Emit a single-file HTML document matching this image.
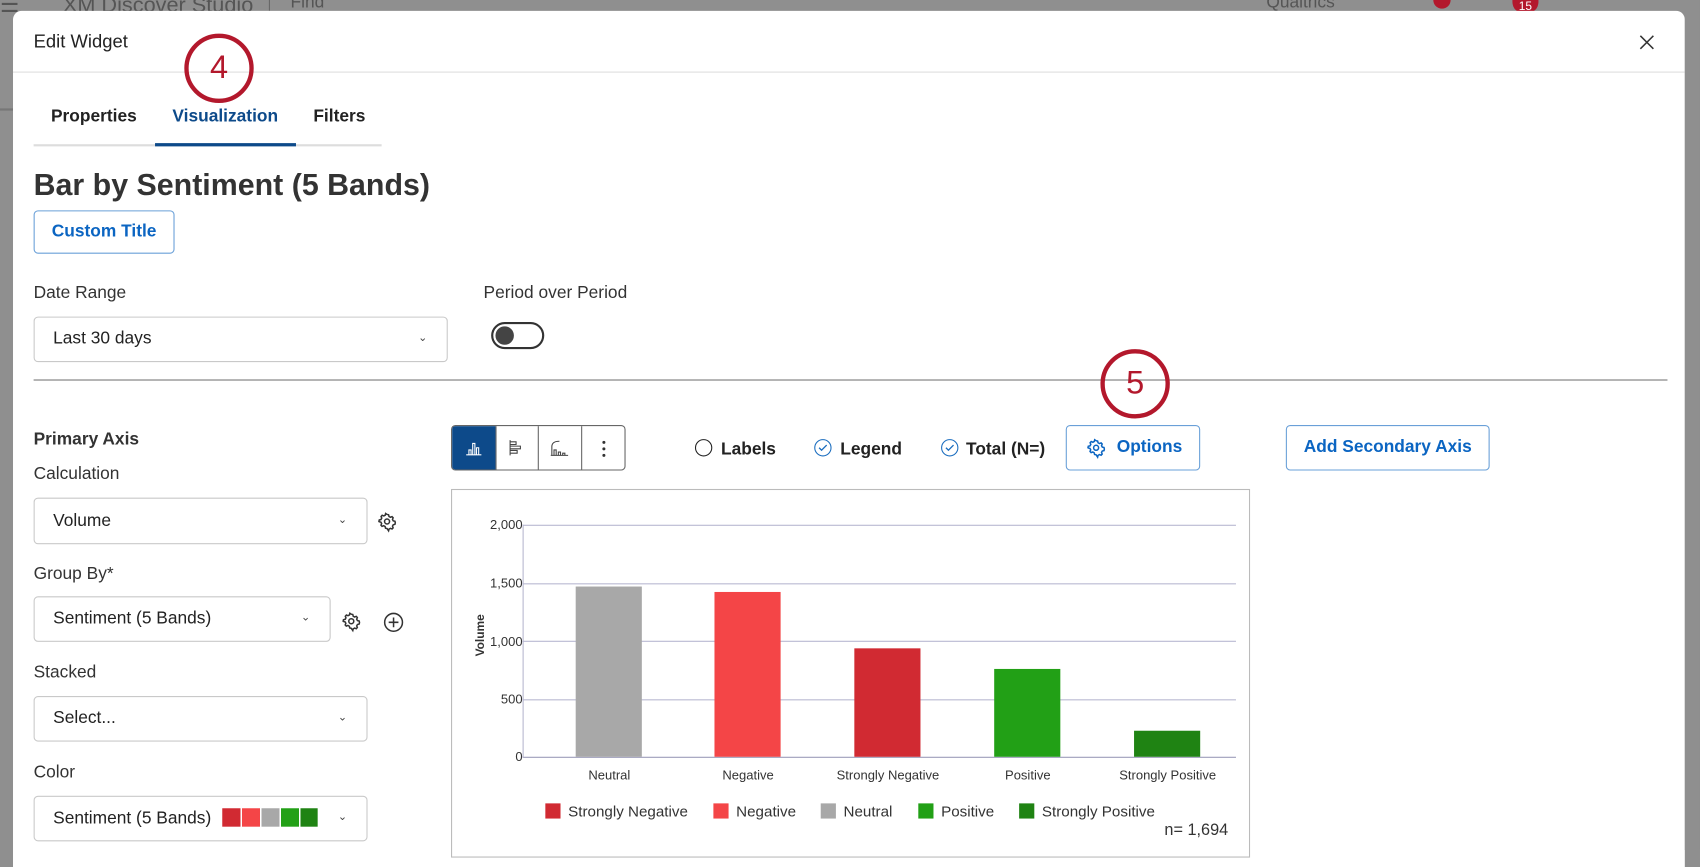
<!DOCTYPE html>
<html><head><meta charset="utf-8"><style>
*{box-sizing:border-box;margin:0;padding:0}
html,body{width:1700px;height:850px;overflow:hidden;background:#8f8f8f;font-family:"Liberation Sans",sans-serif}
#w{position:absolute;left:0;top:0;width:1568px;height:784px;transform:scale(1.08418);transform-origin:0 0}
.a{position:absolute}
.bg{color:#555;font-size:20px}
#modal{left:12px;top:10px;width:1542px;height:790px;background:#fff;border-radius:8px 8px 0 0}
.t{position:absolute;color:#222;font-size:16px;white-space:nowrap}
.sel{position:absolute;border:1px solid #c9c9c9;border-radius:4px;background:#fff}
.sel span{position:absolute;left:17px;top:50%;transform:translateY(-50%);font-size:16px;color:#222}
.sel i{position:absolute;right:18px;top:50%;transform:translateY(-60%);font-style:normal;font-size:10px;color:#444}
.btn{position:absolute;border:1px solid #1a6dbf;border-radius:4px;color:#0b65c2;font-weight:bold;font-size:16px;text-align:center}
.circ{position:absolute;width:64px;height:64px;border:4px solid #b3182c;border-radius:50%;color:#b3182c;font-size:30px;text-align:center;line-height:56px}
.gl{position:absolute;left:482px;width:658px;height:1px;background:#b7b7d0}
.bar{position:absolute;width:61px}
.xl{position:absolute;top:708px;font-size:12px;color:#333;width:140px;text-align:center}
.yl{position:absolute;right:1086px;font-size:12px;color:#333}
.lg{position:absolute;top:740px;font-size:14px;color:#333}
.lg b{display:inline-block;width:14px;height:14px;vertical-align:-2px;margin-right:7px}
svg{position:absolute;overflow:visible}
</style></head><body><div id="w">
<svg width="0" height="0"><defs><g id="gear" fill="none" stroke="currentColor" stroke-width="1.4"><path d="M8 1.5l1.4.3.4 1.6 1.3.7 1.5-.6 1 1.1-.6 1.5.7 1.3 1.6.4.3 1.4-.3 1.4-1.6.4-.7 1.3.6 1.5-1 1.1-1.5-.6-1.3.7-.4 1.6L8 14.5l-1.4-.3-.4-1.6-1.3-.7-1.5.6-1-1.1.6-1.5-.7-1.3-1.6-.4L.5 8l.3-1.4 1.6-.4.7-1.3-.6-1.5 1-1.1 1.5.6 1.3-.7.4-1.6z"/><circle cx="8" cy="8" r="2.3"/></g></defs></svg>
<div class="a bg" style="left:0;top:-8px">☰</div>
<div class="a bg" style="left:58px;top:-6px">XM Discover Studio</div>
<div class="a" style="left:248px;top:0;width:1px;height:10px;background:#666"></div>
<div class="a bg" style="left:268px;top:-6px;font-size:16px">Find</div>
<div class="a bg" style="left:1168px;top:-6px;font-size:16px">Qualtrics</div>
<div class="a" style="left:1322px;top:0;width:16px;height:8px;background:#b3182c;border-radius:0 0 8px 8px"></div>
<div class="a" style="left:1395px;top:0;width:24px;height:12px;background:#b3182c;border-radius:0 0 10px 10px;color:#fff;font-size:11px;text-align:center">15</div>
<div class="a" style="left:0;top:100px;width:12px;height:2px;background:#777"></div>
<div class="a" id="modal"></div>
<div class="t" style="left:31px;top:29px;font-size:17px">Edit Widget</div>
<svg style="left:1513px;top:33px" width="12" height="12"><path d="M0 0L12 12M12 0L0 12" stroke="#333" stroke-width="1.4"/></svg>
<div class="a" style="left:12px;top:66px;width:1542px;height:1px;background:#ddd"></div>
<div class="circ" style="left:170px;top:31px">4</div>
<div class="t" style="left:47px;top:99px;font-weight:bold">Properties</div>
<div class="t" style="left:159px;top:99px;font-weight:bold;color:#0d4a8a">Visualization</div>
<div class="t" style="left:289px;top:99px;font-weight:bold">Filters</div>
<div class="a" style="left:31px;top:133px;width:321px;height:2px;background:#ddd"></div>
<div class="a" style="left:143px;top:132px;width:130px;height:3px;background:#0d4a8a"></div>
<div class="t" style="left:31px;top:155px;font-size:28px;font-weight:bold;color:#333">Bar by Sentiment (5 Bands)</div>
<div class="btn" style="left:31px;top:194px;width:130px;height:40px;line-height:38px;border-color:#6aa0d8">Custom Title</div>
<div class="t" style="left:31px;top:262px;color:#333">Date Range</div>
<div class="t" style="left:446px;top:262px;color:#333">Period over Period</div>
<div class="sel" style="left:31px;top:292px;width:382px;height:42px"><span>Last 30 days</span><i>⌄</i></div>
<div class="a" style="left:453px;top:297px;width:49px;height:25px;border:2px solid #333;border-radius:13px"><div class="a" style="left:2px;top:2px;width:17px;height:17px;border-radius:50%;background:#444"></div></div>
<div class="a" style="left:31px;top:350px;width:1507px;height:1px;background:#777"></div>
<div class="circ" style="left:1015px;top:322px">5</div>
<div class="t" style="left:31px;top:397px;font-weight:bold;color:#333">Primary Axis</div>
<div class="t" style="left:31px;top:429px;color:#333">Calculation</div>
<div class="sel" style="left:31px;top:459px;width:308px;height:43px"><span>Volume</span><i>⌄</i></div>
<svg style="left:349px;top:473px;color:#333" width="16" height="16"><use href="#gear"/></svg>
<div class="t" style="left:31px;top:521px;color:#333">Group By*</div>
<div class="sel" style="left:31px;top:550px;width:274px;height:42px"><span>Sentiment (5 Bands)</span><i>⌄</i></div>
<svg style="left:316px;top:565px;color:#333" width="16" height="16"><use href="#gear"/></svg>
<svg style="left:354px;top:565px" width="18" height="18"><circle cx="9" cy="9" r="8.2" fill="none" stroke="#333" stroke-width="1.4"/><path d="M9 4.5v9M4.5 9h9" stroke="#333" stroke-width="1.4"/></svg>
<div class="t" style="left:31px;top:612px;color:#333">Stacked</div>
<div class="sel" style="left:31px;top:642px;width:308px;height:42px"><span>Select...</span><i>⌄</i></div>
<div class="t" style="left:31px;top:704px;color:#333">Color</div>
<div class="sel" style="left:31px;top:734px;width:308px;height:42px"><span>Sentiment (5 Bands) <b style="display:inline-block;width:88px;height:17px;vertical-align:-3px;margin-left:6px;background:linear-gradient(90deg,#d12a32 0 17px,#fff 17px 18px,#f44547 18px 35px,#fff 35px 36px,#a8a8a8 36px 53px,#fff 53px 54px,#22a016 54px 71px,#fff 71px 72px,#1f8313 72px)"></b></span><i>⌄</i></div>
<!-- toolbar -->
<div class="a" style="left:416px;top:392px;width:161px;height:42px;border:1px solid #666;border-radius:4px;overflow:hidden;background:#fff">
<div class="a" style="left:0;top:0;width:40px;height:42px;background:#0d4a8a"></div>
<svg style="left:13px;top:13px" width="14" height="14"><path d="M0 13.5h14M2.5 13V9h2v4M6 13V3h2v10M9.5 13V7h2v6" fill="none" stroke="#fff" stroke-width="1"/></svg>
<div class="a" style="left:40px;top:0;width:1px;height:42px;background:#666"></div>
<svg style="left:53px;top:13px" width="14" height="14"><path d="M0.5 0v14M1 1.5h5v2.5H1M1 5.5h9v2.5H1M1 9.5h6v2.5H1" fill="none" stroke="#444" stroke-width="1"/></svg>
<div class="a" style="left:79px;top:0;width:1px;height:42px;background:#666"></div>
<svg style="left:91px;top:13px" width="16" height="14"><path d="M1 14V6Q1 1 8 1M3 14V9h2v5M7 14v-3h2v3M11 14v-2h2v2M0 14h16" fill="none" stroke="#444" stroke-width="1"/></svg>
<div class="a" style="left:119px;top:0;width:1px;height:42px;background:#666"></div>
<svg style="left:138px;top:13px" width="4" height="16"><circle cx="2" cy="2" r="1.4" fill="#333"/><circle cx="2" cy="8" r="1.4" fill="#333"/><circle cx="2" cy="14" r="1.4" fill="#333"/></svg>
</div>
<div class="a" style="left:641px;top:405px;width:16px;height:16px;border:1.5px solid #222;border-radius:50%"></div>
<div class="t" style="left:665px;top:406px;font-weight:bold">Labels</div>
<div class="a" style="left:751px;top:405px;width:16px;height:16px;border:1.5px solid #1a6dbf;border-radius:50%"></div>
<svg style="left:755px;top:410px" width="8" height="6"><path d="M0.5 3l2.3 2.3L7.5 0.5" fill="none" stroke="#1a6dbf" stroke-width="1.2"/></svg>
<div class="t" style="left:775px;top:406px;font-weight:bold">Legend</div>
<div class="a" style="left:868px;top:405px;width:16px;height:16px;border:1.5px solid #1a6dbf;border-radius:50%"></div>
<svg style="left:872px;top:410px" width="8" height="6"><path d="M0.5 3l2.3 2.3L7.5 0.5" fill="none" stroke="#1a6dbf" stroke-width="1.2"/></svg>
<div class="t" style="left:891px;top:406px;font-weight:bold">Total (N=)</div>
<div class="btn" style="left:983px;top:392px;width:124px;height:42px;line-height:40px;border-color:#6aa0d8;padding-left:26px;text-align:left;padding-left:46px">Options</div>
<svg style="left:1003px;top:405px;color:#0b65c2" width="16" height="16"><use href="#gear"/></svg>
<div class="btn" style="left:1186px;top:392px;width:188px;height:42px;line-height:40px;border-color:#6aa0d8">Add Secondary Axis</div>
<!-- chart -->
<div class="a" style="left:416px;top:451px;width:737px;height:340px;border:1px solid #bbb"></div>
<div class="gl" style="top:484px"></div><div class="gl" style="top:538px"></div><div class="gl" style="top:591px"></div><div class="gl" style="top:645px"></div><div class="gl" style="top:698px;background:#9a9ab8"></div>
<div class="a" style="left:482px;top:484px;width:1px;height:215px;background:#b7b7d0"></div>
<div class="yl" style="top:477px">2,000</div><div class="yl" style="top:531px">1,500</div><div class="yl" style="top:585px">1,000</div><div class="yl" style="top:638px">500</div><div class="yl" style="top:691px">0</div>
<div class="a" style="left:424px;top:580px;transform:rotate(-90deg);font-size:11px;font-weight:bold;color:#333">Volume</div>
<div class="bar" style="left:531px;top:541px;height:157px;background:#a8a8a8"></div>
<div class="bar" style="left:659px;top:546px;height:152px;background:#f44547"></div>
<div class="bar" style="left:788px;top:598px;height:100px;background:#d12a32"></div>
<div class="bar" style="left:917px;top:617px;height:81px;background:#22a016"></div>
<div class="bar" style="left:1046px;top:674px;height:24px;background:#1f8313"></div>
<div class="xl" style="left:492px">Neutral</div><div class="xl" style="left:620px">Negative</div><div class="xl" style="left:749px">Strongly Negative</div><div class="xl" style="left:878px">Positive</div><div class="xl" style="left:1007px">Strongly Positive</div>
<div class="lg" style="left:503px"><b style="background:#d12a32"></b>Strongly Negative</div>
<div class="lg" style="left:658px"><b style="background:#f44547"></b>Negative</div>
<div class="lg" style="left:757px"><b style="background:#a8a8a8"></b>Neutral</div>
<div class="lg" style="left:847px"><b style="background:#22a016"></b>Positive</div>
<div class="lg" style="left:940px"><b style="background:#1f8313"></b>Strongly Positive</div>
<div class="t" style="left:1074px;top:757px;font-size:15px;color:#333">n= 1,694</div>
<div class="a" style="left:1554px;top:0;width:14px;height:784px;background:#8f8f8f"></div>
</div></body></html>
